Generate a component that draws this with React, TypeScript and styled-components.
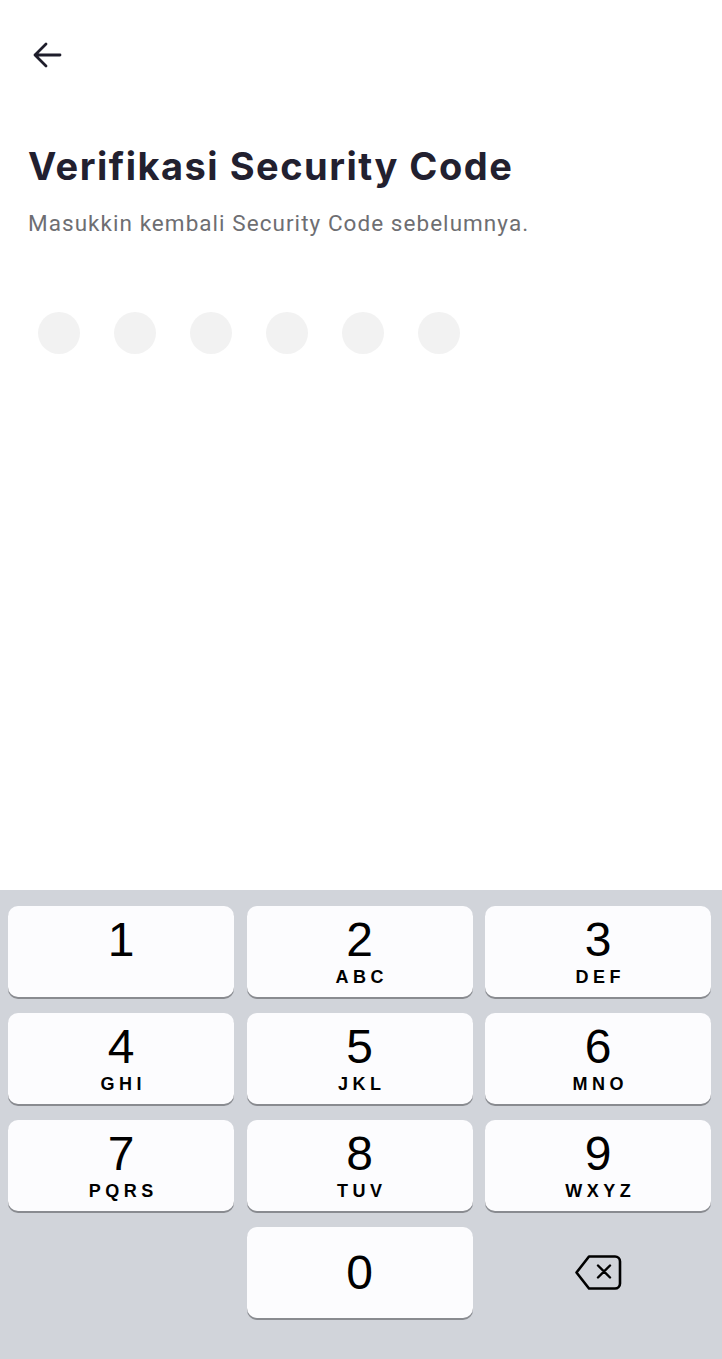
import React from "react";
import styled, { createGlobalStyle } from "styled-components";

const GlobalStyle = createGlobalStyle`
  html, body { margin: 0; padding: 0; background: #ffffff; }
  * { box-sizing: border-box; }
`;

const Page = styled.div`
  width: 100%;
  min-height: 100vh;
  display: flex;
  flex-direction: column;
  background: #ffffff;
`;

const Content = styled.div`
  flex: 1;
  padding: 40px 28px 0;
  display: flex;
  flex-direction: column;
`;

const BackButton = styled.button`
  width: 40px;
  height: 30px;
  padding: 0;
  margin-left: 4px;
  border: none;
  background: transparent;
  display: flex;
  align-items: center;
  justify-content: flex-start;
  color: #1e1d2b;
`;

const Title = styled.h1`
  margin: 73px 0 0;
  font-family: Inter, "Open Sans", sans-serif;
  font-weight: 700;
  font-size: 38px;
  line-height: 46px;
  letter-spacing: 1.5px;
  color: #22202f;
`;

const Subtitle = styled.p`
  margin: 20px 0 0;
  font-family: Roboto, "Noto Sans", sans-serif;
  font-weight: 400;
  font-size: 22.5px;
  line-height: 28px;
  letter-spacing: 1.05px;
  color: #6e6e72;
`;

const Dots = styled.div`
  display: flex;
  gap: 34px;
  margin: 75px 0 0 10px;
`;

const Dot = styled.span<{ $filled?: boolean }>`
  width: 42px;
  height: 42px;
  border-radius: 50%;
  background: ${(p) => (p.$filled ? "#22202f" : "#f2f2f2")};
`;

const Keyboard = styled.div`
  height: 469px;
  background: #d1d4da;
  padding: 16px 11px 0 8px;
  display: grid;
  grid-template-columns: repeat(3, 1fr);
  grid-auto-rows: 91px;
  column-gap: 12.5px;
  row-gap: 16px;
`;

const Key = styled.button`
  border: none;
  border-radius: 10px;
  background: #fcfcfe;
  box-shadow: 0 2px 0 #898b90;
  display: flex;
  flex-direction: column;
  align-items: center;
  justify-content: flex-start;
  padding: 10px 0 0;
  color: #000000;
  cursor: pointer;
`;

const EmptyCell = styled.div``;

const IconCell = styled.button`
  border: none;
  background: transparent;
  display: flex;
  align-items: center;
  justify-content: center;
  padding: 0;
  color: #000;
`;

const Digit = styled.span<{ $center?: boolean }>`
  font-family: "Liberation Sans", Arial, sans-serif;
  font-weight: 400;
  font-size: 48px;
  line-height: 47px;
  margin-top: ${(p) => (p.$center ? "12px" : "0")};
`;

const Letters = styled.span`
  font-family: "Liberation Sans", Arial, sans-serif;
  font-weight: 700;
  font-size: 18px;
  line-height: 18px;
  letter-spacing: 4.5px;
  margin-left: 4.5px;
  margin-top: 4.5px;
`;

const keys: { d: string; l: string }[] = [
  { d: "1", l: "" },
  { d: "2", l: "ABC" },
  { d: "3", l: "DEF" },
  { d: "4", l: "GHI" },
  { d: "5", l: "JKL" },
  { d: "6", l: "MNO" },
  { d: "7", l: "PQRS" },
  { d: "8", l: "TUV" },
  { d: "9", l: "WXYZ" },
];

const BackArrow = () => (
  <svg width="30" height="26" viewBox="0 0 30 26" fill="none">
    <path
      d="M28 13H3M14 2L3 13l11 11"
      stroke="currentColor"
      strokeWidth="2.8"
      strokeLinecap="round"
      strokeLinejoin="round"
    />
  </svg>
);

const BackspaceIcon = () => (
  <svg width="48" height="37" viewBox="0 0 48 37" fill="none">
    <path
      d="M15 2.5H41a5 5 0 0 1 5 5V29.5a5 5 0 0 1-5 5H15L2.5 18.5Z"
      stroke="currentColor"
      strokeWidth="2.6"
      strokeLinejoin="round"
    />
    <path
      d="M24 11.5l12 12M36 11.5l-12 12"
      stroke="currentColor"
      strokeWidth="2.4"
      strokeLinecap="round"
    />
  </svg>
);

export default function App() {
  return (
    <Page>
      <GlobalStyle />
      <Content>
        <BackButton aria-label="Kembali">
          <BackArrow />
        </BackButton>
        <Title>Verifikasi Security Code</Title>
        <Subtitle>Masukkin kembali Security Code sebelumnya.</Subtitle>
        <Dots>
          {Array.from({ length: 6 }).map((_, i) => (
            <Dot key={i} />
          ))}
        </Dots>
      </Content>
      <Keyboard>
        {keys.map((k) => (
          <Key key={k.d}>
            <Digit>{k.d}</Digit>
            {k.l && <Letters>{k.l}</Letters>}
          </Key>
        ))}
        <EmptyCell />
        <Key>
          <Digit $center>0</Digit>
        </Key>
        <IconCell aria-label="Hapus">
          <BackspaceIcon />
        </IconCell>
      </Keyboard>
    </Page>
  );
}
